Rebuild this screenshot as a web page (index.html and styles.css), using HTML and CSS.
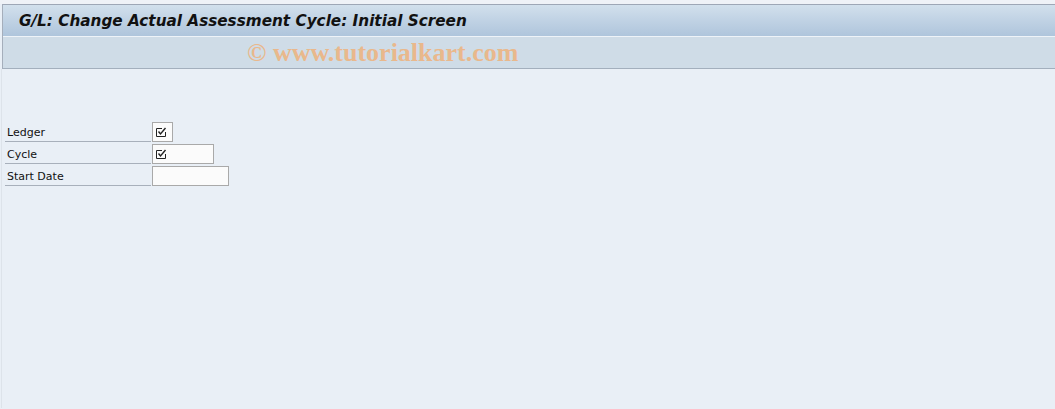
FILE: index.html
```html
<!DOCTYPE html>
<html lang="en">
<head>
  <meta charset="UTF-8">
  <title>G/L: Change Actual Assessment Cycle: Initial Screen</title>
  <link rel="stylesheet" href="styles.css">
</head>
<body>
  <div class="top-strip"></div>
  <div class="header">
    <div class="title-bar">
      <h1 class="title">G/L: Change Actual Assessment Cycle: Initial Screen</h1>
    </div>
    <div class="toolbar">
      <span class="watermark">© www.tutorialkart.com</span>
    </div>
  </div>

  <div class="content">
    <!-- selection fields -->
    <div class="form">
      <div class="row">
        <label class="label">Ledger</label>
        <div class="field f-check">
          <svg class="req" width="12" height="12" viewBox="0 0 12 12">
            <path d="M1.5 2.5 H7 M1.5 2.5 V10.5 H10.5 V6" fill="none" stroke="#222" stroke-width="1"/>
            <path d="M3.5 5.5 L5.5 8 L10.5 2" fill="none" stroke="#222" stroke-width="1.4"/>
          </svg>
        </div>
      </div>
      <div class="row">
        <label class="label">Cycle</label>
        <div class="field f-cycle">
          <svg class="req" width="12" height="12" viewBox="0 0 12 12">
            <path d="M1.5 2.5 H7 M1.5 2.5 V10.5 H10.5 V6" fill="none" stroke="#222" stroke-width="1"/>
            <path d="M3.5 5.5 L5.5 8 L10.5 2" fill="none" stroke="#222" stroke-width="1.4"/>
          </svg>
        </div>
      </div>
      <div class="row">
        <label class="label">Start Date</label>
        <div class="field f-date"></div>
      </div>
    </div>
  </div>
</body>
</html>
```

FILE: styles.css
```css
body, html {
  margin: 0;
  padding: 0;
  height: 100%;
  overflow: hidden;
  background: #e9eff6;
  font-family: Tahoma, "DejaVu Sans", sans-serif;
}
.top-strip {
  height: 4px;
  background: #eff2f7;
}
.header {
  margin-left: 2px;
  border-top: 1px solid #9ea7b6;
  border-left: 1px solid #a5aebb;
  border-bottom: 1px solid #a3afbd;
}
.title-bar {
  height: 31px;
  background: linear-gradient(to bottom, #d2e0ec 0%, #c0d2e4 50%, #afc5dc 100%);
  border-bottom: 1px solid #eef3f8;
  display: flex;
  align-items: center;
}
.title {
  margin: 0 0 0 16px;
  font-family: "DejaVu Sans", sans-serif;
  font-size: 15.25px;
  font-weight: bold;
  font-style: italic;
  color: #111;
}
.toolbar {
  height: 31px;
  background: #cfdce7;
  display: flex;
  align-items: center;
}
.watermark {
  margin-left: 244px;
  font-family: "Liberation Serif", serif;
  font-weight: bold;
  font-size: 26px;
  color: #e9b88c;
}
.content {
  height: 339px;
  border-left: 1px solid #dde3ea;
  margin-left: 1px;
}
.form {
  padding-top: 52px;
  padding-left: 3px;
}
.row {
  display: flex;
  align-items: flex-start;
  height: 22px;
}
.label {
  width: 146px;
  height: 21px;
  border-bottom: 1px solid #a8b0bb;
  box-sizing: border-box;
  padding: 5px 0 0 2px;
  font-family: "DejaVu Sans", sans-serif;
  font-size: 11px;
  color: #111;
}
.field {
  margin: 1px 0 0 1px;
  height: 20px;
  box-sizing: border-box;
  border: 1px solid #a9a9a9;
  background: #fbfbfb;
  display: flex;
  align-items: center;
  padding-left: 2px;
}
.f-check { width: 21px; }
.f-cycle { width: 62px; }
.f-date { width: 77px; }
.req { display: block; }
```
